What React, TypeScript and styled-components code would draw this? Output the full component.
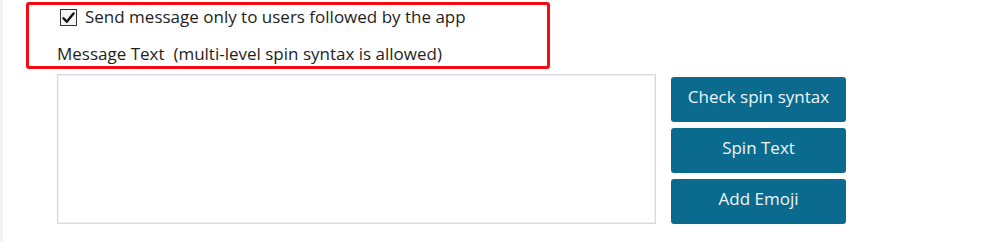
import React from "react";
import styled, { createGlobalStyle } from "styled-components";

const GlobalStyle = createGlobalStyle`
  html, body { margin: 0; padding: 0; background: #ffffff; }
  body { font-family: "Open Sans", "Noto Sans", sans-serif; color: #1e1e1e; }
`;

const Page = styled.div`
  display: flex;
  width: 997px;
  height: 242px;
  overflow: hidden;
  background: #ffffff;
`;

const LeftStrip = styled.div`
  width: 3px;
  flex: none;
  background: #f1f2f2;
`;

const Main = styled.div`
  display: flex;
  flex-direction: column;
  padding: 2px 0 0 23px;
`;

const HighlightBox = styled.div`
  box-sizing: border-box;
  width: 524px;
  height: 67px;
  border: 3px solid #f40b12;
  border-radius: 3px;
  display: flex;
  flex-direction: column;
`;

const CheckRow = styled.label`
  display: flex;
  align-items: center;
  gap: 8px;
  margin: 4px 0 0 31px;
  height: 17px;
  font-size: 17px;
  line-height: 17px;
`;

const Box = styled.span`
  box-sizing: border-box;
  width: 17px;
  height: 17px;
  flex: none;
  border: 1px solid #333333;
  background: #f4f4f4;
  display: flex;
  align-items: center;
  justify-content: center;
`;

const CheckText = styled.span`
  margin-top: -3px;
`;

const FieldLabel = styled.div`
  margin: 18px 0 0 28px;
  font-size: 17px;
  line-height: 20px;
`;

const EditorRow = styled.div`
  display: flex;
  align-items: flex-start;
  margin: 5px 0 0 31px;
`;

const MessageArea = styled.textarea`
  box-sizing: border-box;
  width: 599px;
  height: 150px;
  border: 1px solid #d8d8e2;
  box-shadow: inset 0 0 0 1px #f0f0f5;
  resize: none;
  outline: none;
  background: #ffffff;
  margin: 0;
  padding: 4px;
`;

const ButtonColumn = styled.div`
  display: flex;
  flex-direction: column;
  gap: 6px;
  margin: 3px 0 0 15px;
`;

const ActionButton = styled.button`
  box-sizing: border-box;
  width: 175px;
  height: 45px;
  border: none;
  border-radius: 3px;
  background: #0a6b8e;
  color: #eef5f8;
  font-family: "Open Sans", "Noto Sans", sans-serif;
  font-size: 17px;
  padding: 0 0 7px 0;
  cursor: pointer;
`;

export default function App() {
  return (
    <>
      <GlobalStyle />
      <Page>
        <LeftStrip />
        <Main>
          <HighlightBox>
            <CheckRow>
              <Box>
                <svg width="13" height="12" viewBox="0 0 13 12">
                  <path d="M1.5 6.2 L4.8 9.8 L11.5 1.5" fill="none" stroke="#111" strokeWidth="2.4" strokeLinecap="round" strokeLinejoin="round" />
                </svg>
              </Box>
              <CheckText>Send message only to users followed by the app</CheckText>
            </CheckRow>
            <FieldLabel>Message Text&nbsp; (multi-level spin syntax is allowed)</FieldLabel>
          </HighlightBox>
          <EditorRow>
            <MessageArea />
            <ButtonColumn>
              <ActionButton>Check spin syntax</ActionButton>
              <ActionButton>Spin Text</ActionButton>
              <ActionButton>Add Emoji</ActionButton>
            </ButtonColumn>
          </EditorRow>
        </Main>
      </Page>
    </>
  );
}
